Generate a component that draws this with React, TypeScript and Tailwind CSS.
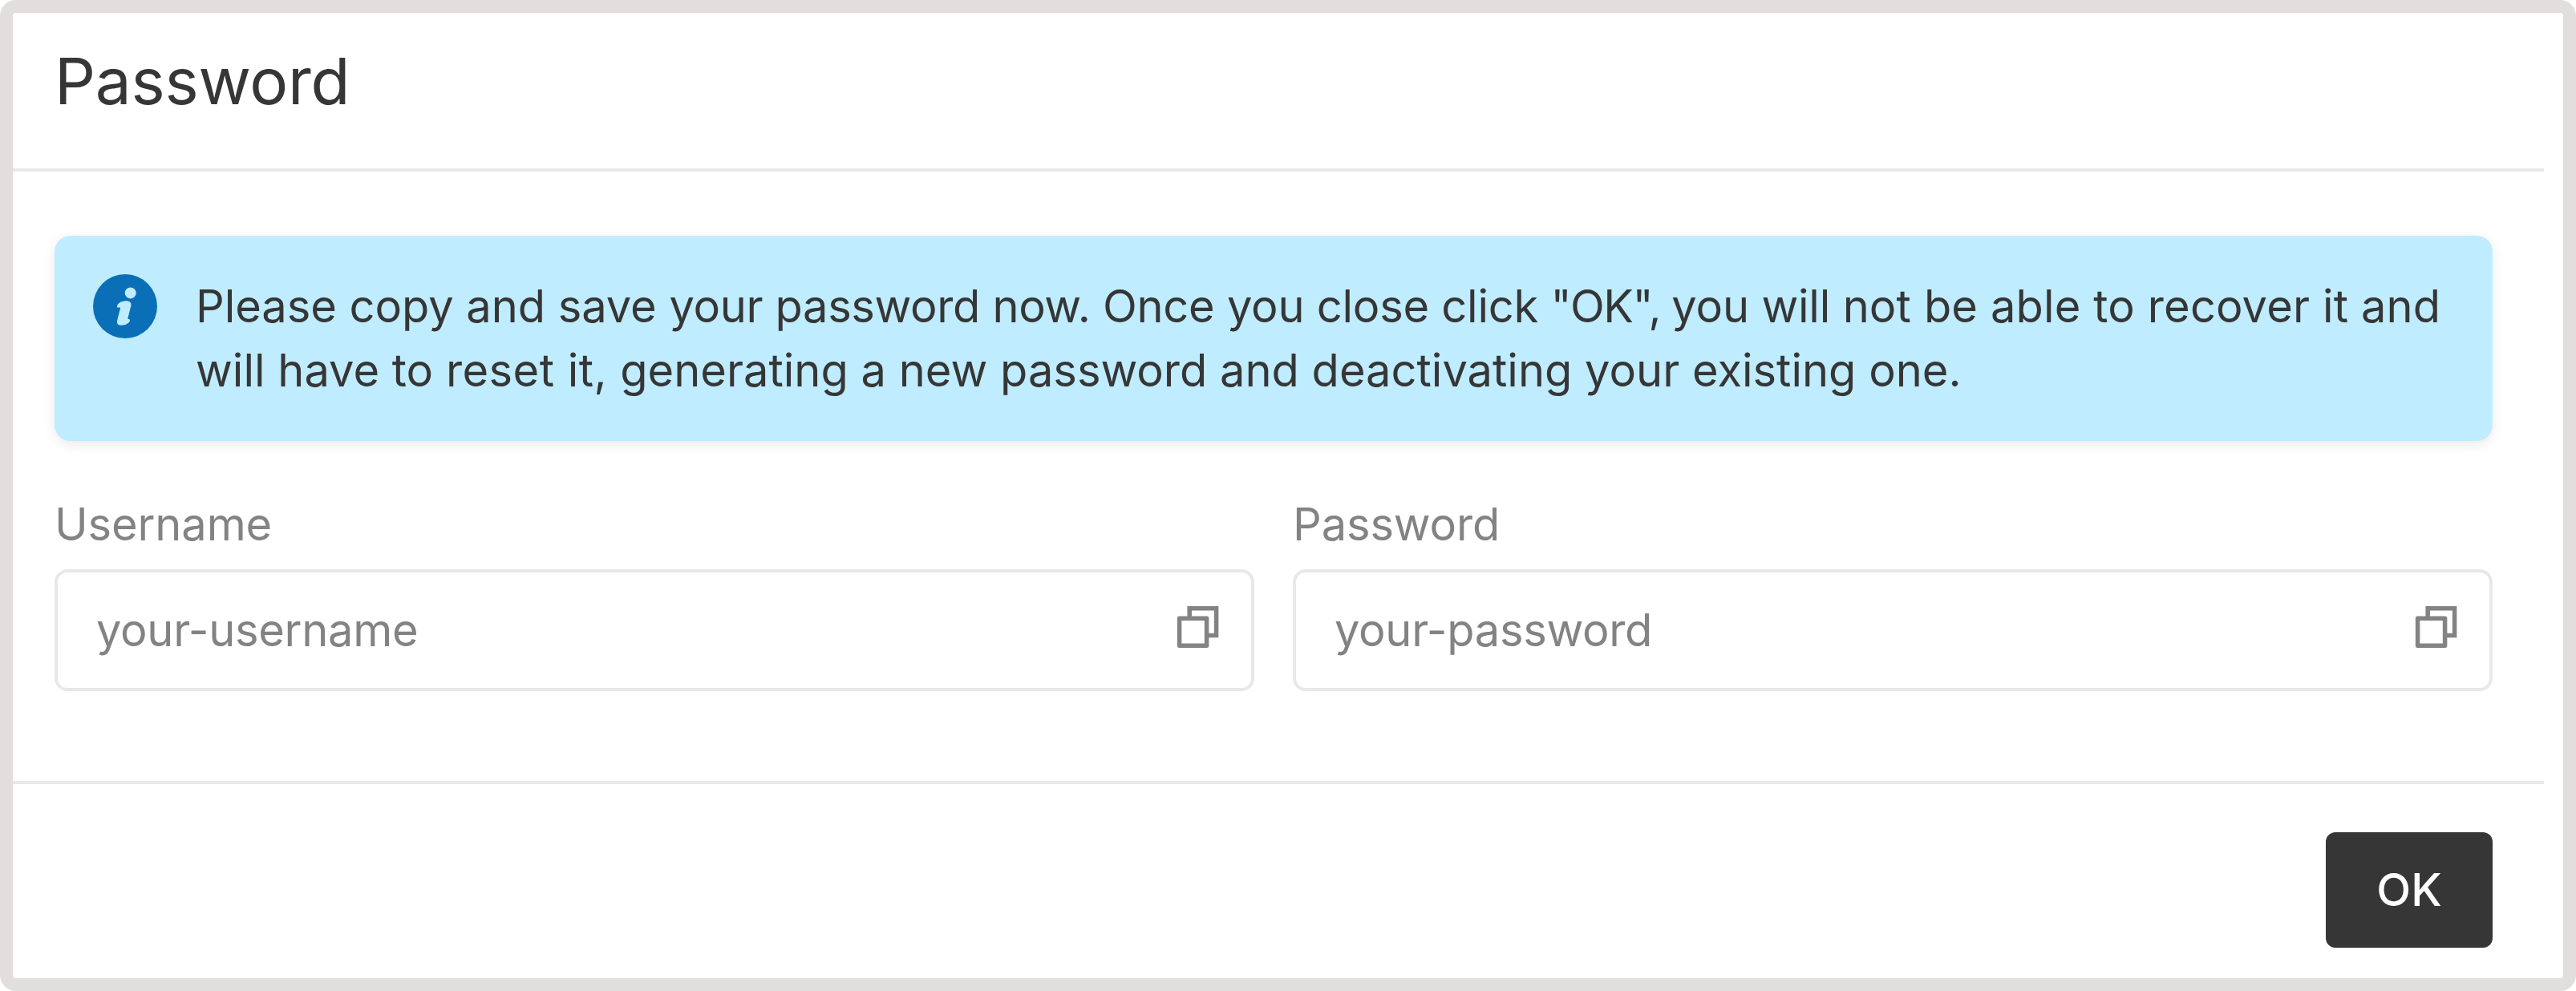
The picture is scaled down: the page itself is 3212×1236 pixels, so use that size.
import React from "react";

function InfoIcon() {
  return (
    <svg viewBox="0 0 80 80" className="size-20 shrink-0" aria-hidden="true">
      <circle cx="40" cy="40" r="40" fill="#0b6fb8" />
      <circle cx="46.7" cy="23.4" r="7" fill="#bfecff" />
      <path
        fill="#bfecff"
        d="M30 40.500C29.800 37 35 33.300 41 33.300C46 33.300 48.200 36 47.300 39.500L43.500 54.500C43.200 56 43.800 56.300 44.600 56.100C45.900 55.800 46.300 57.200 45.700 58.600C44.300 61.800 40 63.800 35.500 63.800C30.800 63.800 29.300 61.400 30.200 57.500L33.800 43.200C34.200 41.600 33.500 41 32.300 41.500C31 42 30.100 41.800 30 40.500Z"
      />
    </svg>
  );
}

function CopyIcon() {
  return (
    <svg
      viewBox="0 0 56 54"
      className="h-[54px] w-14 shrink-0"
      fill="none"
      stroke="#838383"
      strokeWidth="5.500"
      strokeLinejoin="round"
      aria-hidden="true"
    >
      <path strokeLinejoin="miter" d="M17.200 15V3.700H50.600V37.400H39" />
      <rect x="4.600" y="16.300" width="34" height="34" />
    </svg>
  );
}

function Field({ label, value }: { label: string; value: string }) {
  return (
    <div className="flex flex-1 flex-col">
      <label className="h-20 text-[56px] leading-20 tracking-[-0.12px] text-[#838383]">{label}</label>
      <div className="mt-4 flex h-[152px] items-center justify-between rounded-[16px] border-4 border-[#e8e8e8] pr-[38px] pl-12">
        <span className="text-[56px] leading-20 tracking-[-0.3px] text-[#838383]">{value}</span>
        <span className="-mt-2">
          <CopyIcon />
        </span>
      </div>
    </div>
  );
}

export default function App() {
  return (
    <div className="h-[1236px] w-[3212px] bg-white">
      <div className="flex h-full flex-col rounded-[20px] border-[16px] border-[#e2dedd] bg-white pr-6 font-['Inter',sans-serif] text-[#363636]">
        <header className="h-[198px] border-b-4 border-[#e8e8e8] pt-[37px] pl-[52px]">
          <h1 className="text-[80px] leading-[96px] tracking-[-0.25px]">Password</h1>
        </header>
        <main className="flex h-[764px] flex-col border-b-4 border-[#e8e8e8] pt-20 pr-16 pl-[52px]">
          <div className="flex h-64 rounded-[20px] bg-[#bfecff] p-12 shadow-[0_4px_16px_rgba(0,0,0,0.09)]">
            <InfoIcon />
            <p className="ml-12 flex-1 text-[56px] leading-20 whitespace-nowrap">
              <span className="tracking-[-0.05px]">Please copy and save </span>
              <span className="tracking-[-0.35px]">your password now. </span>
              <span className="tracking-[-0.25px]">Once you close click </span>
              <span className="tracking-[-1.5px]">"OK", </span>
              <span className="tracking-[-0.2px]">you will </span>
              <span className="tracking-[0.13px]">not be able to recover it and</span>
              <br />
              <span>will have to </span>
              <span className="tracking-[0.45px]">reset it, </span>
              <span>generating a new password and deactivating your existing one.</span>
            </p>
          </div>
          <div className="mt-16 flex gap-12">
            <Field label="Username" value="your-username" />
            <Field label="Password" value="your-password" />
          </div>
        </main>
        <footer className="flex justify-end pt-15 pr-16">
          <button className="h-36 w-52 rounded-[12px] bg-[#363636] text-[56px] leading-20 font-medium text-white">
            OK
          </button>
        </footer>
      </div>
    </div>
  );
}
